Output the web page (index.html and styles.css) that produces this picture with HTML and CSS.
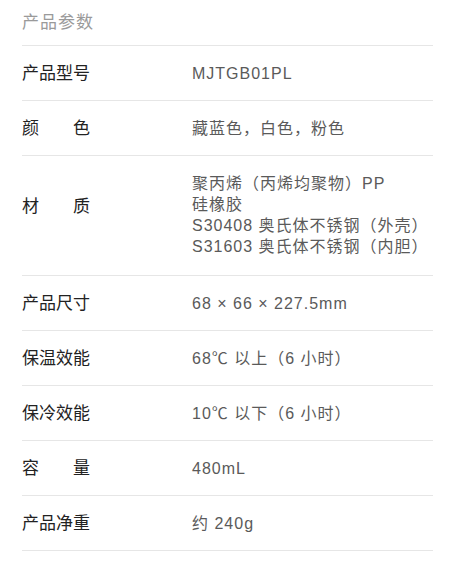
FILE: index.html
```html
<!DOCTYPE html>
<html lang="zh-CN">
<head>
<meta charset="utf-8">
<link rel="stylesheet" href="styles.css">
</head>
<body>
<div class="specs">
  <div class="title">产品参数</div>
  <div class="row"><div class="label">产品型号</div><div class="value">MJTGB01PL</div></div>
  <div class="row"><div class="label">颜色</div><div class="value">藏蓝色，白色，粉色</div></div>
  <div class="row multi"><div class="label">材质</div><div class="value">聚丙烯（丙烯均聚物）PP<br>硅橡胶<br>S30408 奥氏体不锈钢（外壳）<br>S31603 奥氏体不锈钢（内胆）</div></div>
  <div class="row"><div class="label">产品尺寸</div><div class="value">68 × 66 × 227.5mm</div></div>
  <div class="row"><div class="label">保温效能</div><div class="value">68℃ 以上（6 小时）</div></div>
  <div class="row"><div class="label">保冷效能</div><div class="value">10℃ 以下（6 小时）</div></div>
  <div class="row"><div class="label">容量</div><div class="value">480mL</div></div>
  <div class="row"><div class="label">产品净重</div><div class="value">约 240g</div></div>
</div>
</body>
</html>
```
FILE: styles.css
```css
html, body {
  margin: 0;
  padding: 0;
  background: #ffffff;
}
body {
  font-family: "Liberation Sans", "Noto Sans CJK SC", sans-serif;
  font-size: 16px;
  line-height: 21px;
  letter-spacing: 1px;
}
.specs {
  padding: 0 21px 0 22px;
}
.title {
  color: #9a9a9a;
  font-size: 17px;
  padding: 12px 0;
  border-bottom: 1px solid #e6e6e6;
}
.row {
  display: flex;
  align-items: center;
  padding: 16.5px 0;
  border-bottom: 1px solid #e6e6e6;
}
.row.multi {
  padding: 17px 0 18px;
}
.label {
  width: 68px;
  margin-right: 102px;
  color: #222222;
  font-size: 17px;
  letter-spacing: 0;
  text-align: justify;
  text-align-last: justify;
  flex: none;
}
.multi .label {
  margin-bottom: 17px;
}
.value {
  color: #5a5a5a;
}
```
